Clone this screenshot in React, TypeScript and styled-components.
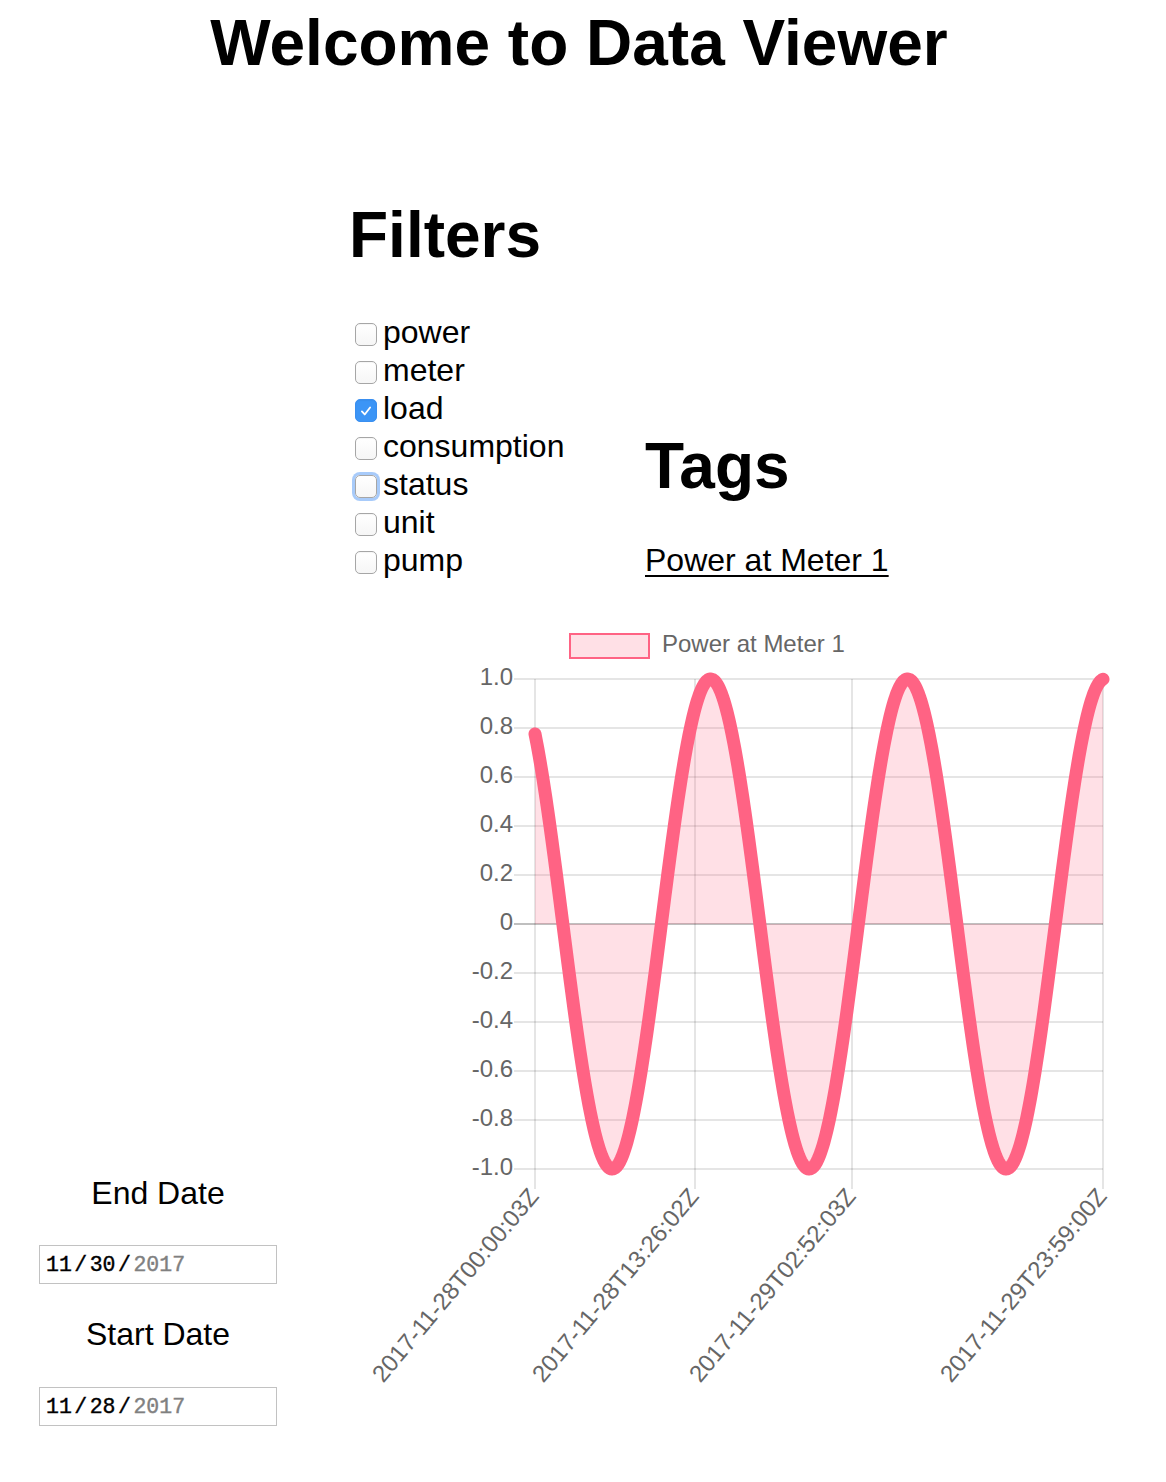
import React from "react";
import styled, { createGlobalStyle } from "styled-components";

const SANS = `"Liberation Sans", Arial, Helvetica, sans-serif`;
const MONO = `"Liberation Mono", "Courier New", monospace`;

const FILTERS = [
  { name: "power" },
  { name: "meter" },
  { name: "load", checked: true },
  { name: "consumption" },
  { name: "status", focused: true },
  { name: "unit" },
  { name: "pump" },
];

// chart geometry, in svg pixels (svg sits at page x 360, y 620)
const PLOT_LEFT = 175;
const PLOT_RIGHT = 743;
const ZERO_Y = 304;
const UNIT = 245;
const PERIOD = 197;
const PEAK_X = 153.6;
const LABEL_Y = 573;

const yFor = (v: number) => ZERO_Y - v * UNIT;

const Y_TICKS = ["1.0", "0.8", "0.6", "0.4", "0.2", "0", "-0.2", "-0.4", "-0.6", "-0.8", "-1.0"];

const X_TICKS = [
  { x: 175, label: "2017-11-28T00:00:03Z" },
  { x: 335, label: "2017-11-28T13:26:02Z" },
  { x: 492, label: "2017-11-29T02:52:03Z" },
  { x: 743, label: "2017-11-29T23:59:00Z" },
];

const wavePoints = () => {
  const pts: [number, number][] = [];
  for (let x = PLOT_LEFT; x <= PLOT_RIGHT; x += 1) {
    const v = Math.cos((2 * Math.PI * (x - PEAK_X)) / PERIOD);
    pts.push([x, yFor(v)]);
  }
  return pts;
};

const GlobalStyle = createGlobalStyle`
  body {
    margin: 0;
    background: #ffffff;
    font-family: ${SANS};
    color: #000000;
  }
`;

const App = () => {
  const pts = wavePoints();
  const line = pts.map(([x, y], i) => `${i ? "L" : "M"}${x} ${y.toFixed(2)}`).join(" ");
  const area = `${line} L${PLOT_RIGHT} ${ZERO_Y} L${PLOT_LEFT} ${ZERO_Y} Z`;

  return (
    <Page>
      <GlobalStyle />
      <Title>Welcome to Data Viewer</Title>

      <FilterRow>
        <FilterColumn>
          <SectionHeading $gap={41} $indent={4}>
            Filters
          </SectionHeading>
          {FILTERS.map((f) => (
            <CheckRow key={f.name}>
              <Box $checked={!!f.checked} $focused={!!f.focused}>
                {f.checked && (
                  <svg width="22" height="22" viewBox="0 0 22 22">
                    <path
                      d="M6.5 11.5 L9.6 14.8 L15.5 7.2"
                      fill="none"
                      stroke="#ffffff"
                      strokeWidth="2"
                      strokeLinecap="round"
                      strokeLinejoin="round"
                    />
                  </svg>
                )}
              </Box>
              {f.name}
            </CheckRow>
          ))}
        </FilterColumn>

        <TagsColumn>
          <SectionHeading $gap={38} $indent={1}>
            Tags
          </SectionHeading>
          <TagLink href="#">Power at Meter 1</TagLink>
        </TagsColumn>
      </FilterRow>

      <BottomRow>
        <DateColumn>
          <DateLabel $gap={33}>End Date</DateLabel>
          <DateField $gap={31}>
            <DateSeg>11</DateSeg>
            <Slash>/</Slash>
            <DateSeg>30</DateSeg>
            <Slash>/</Slash>
            <DateSeg $muted>2017</DateSeg>
          </DateField>
          <DateLabel $gap={34}>Start Date</DateLabel>
          <DateField $gap={0}>
            <DateSeg>11</DateSeg>
            <Slash>/</Slash>
            <DateSeg>28</DateSeg>
            <Slash>/</Slash>
            <DateSeg $muted>2017</DateSeg>
          </DateField>
        </DateColumn>

        <ChartSvg width="760" height="806" viewBox="0 0 760 806">
          <rect x="210" y="14" width="79" height="24" fill="rgba(255,99,132,0.2)" stroke="rgb(255,99,132)" strokeWidth="2" />
          <ChartText x="302" y="26" dominantBaseline="middle">
            Power at Meter 1
          </ChartText>

          {Y_TICKS.map((t) => {
            const y = yFor(parseFloat(t));
            const zero = t === "0";
            return (
              <g key={t}>
                <line
                  x1="154"
                  x2={PLOT_RIGHT}
                  y1={y}
                  y2={y}
                  stroke={zero ? "rgba(0,0,0,0.25)" : "rgba(0,0,0,0.1)"}
                  strokeWidth="2"
                />
                <ChartText x="153" y={y} textAnchor="end" dominantBaseline="middle">
                  {t}
                </ChartText>
              </g>
            );
          })}

          {X_TICKS.map((t) => (
            <g key={t.label}>
              <line x1={t.x} x2={t.x} y1={yFor(1)} y2={yFor(-1) + 20} stroke="rgba(0,0,0,0.1)" strokeWidth="2" />
              <ChartText
                x={t.x}
                y={LABEL_Y}
                textAnchor="end"
                dominantBaseline="middle"
                transform={`rotate(-50 ${t.x} ${LABEL_Y})`}
              >
                {t.label}
              </ChartText>
            </g>
          ))}

          <path d={area} fill="rgba(255,99,132,0.2)" />
          <path d={line} fill="none" stroke="rgb(255,99,132)" strokeWidth="13" strokeLinecap="round" strokeLinejoin="round" />
        </ChartSvg>
      </BottomRow>
    </Page>
  );
};

export default App;

const Page = styled.div`
  width: 1166px;
  padding-bottom: 56px;
`;

const Title = styled.h1`
  margin: 6px 0 0;
  padding-right: 8px;
  font-size: 64px;
  line-height: 74px;
  font-weight: bold;
  text-align: center;
`;

const FilterRow = styled.div`
  display: flex;
  align-items: flex-end;
  margin-top: 118px;
  padding-left: 345px;
`;

const FilterColumn = styled.div`
  width: 299px;
`;

const TagsColumn = styled.div`
  display: flex;
  flex-direction: column;
  align-items: flex-start;
`;

const SectionHeading = styled.h2<{ $gap: number; $indent: number }>`
  margin: 0 0 ${(p) => p.$gap}px;
  padding-left: ${(p) => p.$indent}px;
  font-size: 64px;
  line-height: 74px;
  font-weight: bold;
`;

const CheckRow = styled.label`
  display: flex;
  align-items: center;
  height: 38px;
  font-size: 32px;
  line-height: 38px;
`;

const Box = styled.span<{ $checked: boolean; $focused: boolean }>`
  box-sizing: border-box;
  width: 22px;
  height: 23px;
  margin: 5px 6px 0 10px;
  border-radius: 5px;
  border: 1px solid ${(p) => (p.$checked ? "#3a8ff0" : "#a6a6a6")};
  background: ${(p) => (p.$checked ? "#3c95f6" : "linear-gradient(#ffffff, #f6f6f6)")};
  box-shadow: ${(p) => (p.$focused ? "0 0 0 3px rgba(96, 160, 245, 0.55)" : "inset 0 1px 1px rgba(0,0,0,0.04)")};
  display: flex;
  flex-shrink: 0;
`;

const TagLink = styled.a`
  margin-left: 1px;
  font-size: 32px;
  line-height: 38px;
  color: #000000;
  text-decoration: underline;
  text-decoration-thickness: 2px;
  text-underline-offset: 4px;
`;

const BottomRow = styled.div`
  display: flex;
  align-items: flex-end;
  margin-top: 41px;
`;

const DateColumn = styled.div`
  width: 238px;
  margin-left: 39px;
`;

const DateLabel = styled.div<{ $gap: number }>`
  font-size: 32px;
  line-height: 38px;
  text-align: center;
  margin-bottom: ${(p) => p.$gap}px;
`;

const DateField = styled.div<{ $gap: number }>`
  box-sizing: border-box;
  height: 39px;
  margin-bottom: ${(p) => p.$gap}px;
  padding-left: 6px;
  border: 1px solid #c2c2c2;
  display: flex;
  align-items: center;
  font-family: ${MONO};
  font-size: 21.5px;
  -webkit-text-stroke: 0.4px currentColor;
`;

const DateSeg = styled.span<{ $muted?: boolean }>`
  color: ${(p) => (p.$muted ? "#808080" : "#000000")};
`;

const Slash = styled.span`
  margin: 0 2.5px;
`;

const ChartSvg = styled.svg`
  display: block;
  margin-left: 83px;
  overflow: visible;
`;

const ChartText = styled.text`
  font-family: ${SANS};
  font-size: 24px;
  fill: #666666;
`;
